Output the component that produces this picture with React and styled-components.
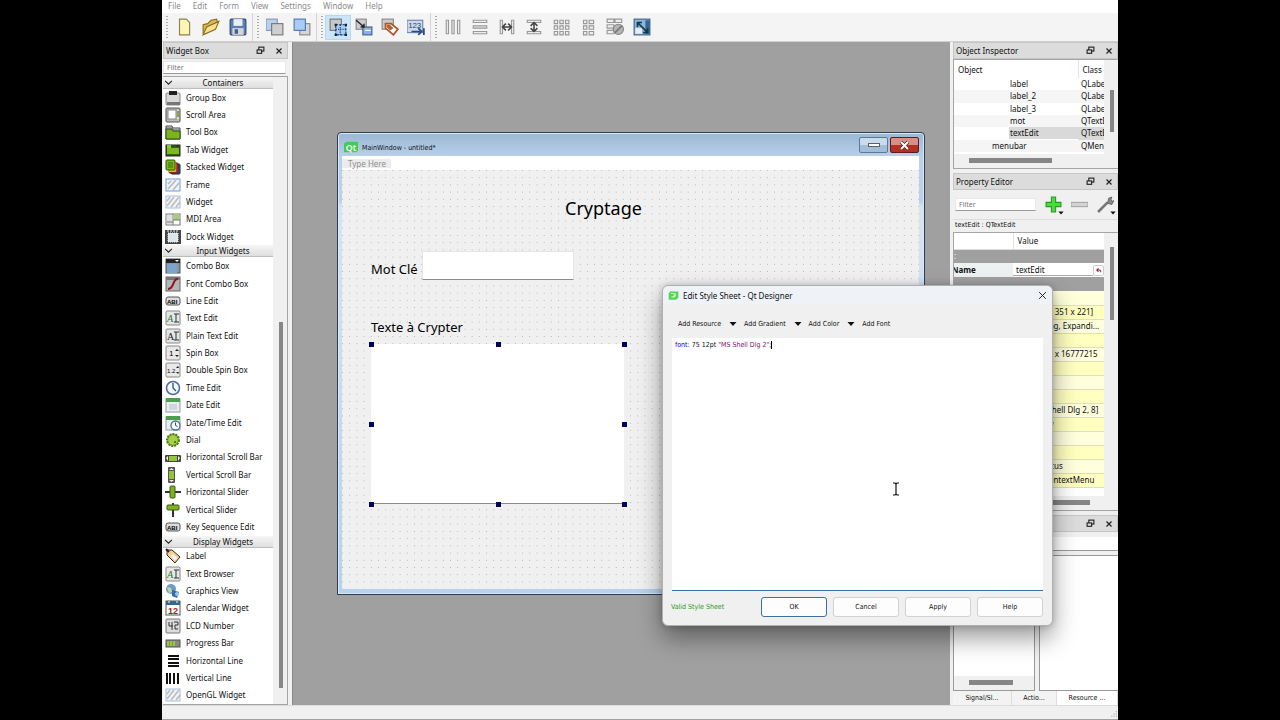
import styled, { createGlobalStyle } from "styled-components";

const icons = {
  groupBox: (
    <>
      <rect x="1" y="3" width="14" height="12" rx="1" fill="#d9d9d9" stroke="#8a8a8a" />
      <rect x="2" y="12" width="13" height="3" fill="#777" />
      <rect x="4" y="1" width="8" height="4" fill="#222" />
    </>
  ),
  scrollArea: (
    <>
      <rect x="1" y="1" width="14" height="14" rx="1" fill="#bbb" stroke="#555" />
      <rect x="3" y="3" width="8" height="9" fill="#fff" stroke="#888" />
      <rect x="12" y="3" width="2" height="9" fill="#e8e8c0" />
      <path d="M12 5h2M12 9h2" stroke="#333" />
      <rect x="12" y="6" width="2" height="2" fill="#8b0" />
    </>
  ),
  toolBox: (
    <>
      <path d="M1 2h6l1 2h7v11H1z" fill="#e5e5e5" stroke="#444" />
      <path d="M1 5h6l1 2h7v8H1z" fill="#7ab51d" stroke="#2f4a0c" />
      <path d="M1 4h6l1 2h7" fill="none" stroke="#555" />
    </>
  ),
  tabWidget: (
    <>
      <rect x="1" y="3" width="14" height="11" fill="#3c5c10" stroke="#222" />
      <rect x="2" y="6" width="12" height="6" fill="#7cb81f" />
      <rect x="2" y="3" width="4" height="3" fill="#8ccc2a" />
      <rect x="7" y="3" width="3" height="2" fill="#1f5030" />
      <rect x="11" y="3" width="3" height="2" fill="#2b3d11" />
    </>
  ),
  stacked: (
    <>
      <rect x="6" y="5" width="9" height="10" rx="1" fill="#2f5fa8" stroke="#123" />
      <rect x="4" y="4" width="9" height="10" rx="1" fill="#d2382a" stroke="#611" />
      <rect x="3" y="3" width="8" height="10" rx="1" fill="#e2b822" />
      <rect x="1" y="1" width="9" height="10" rx="1" fill="#79b81c" stroke="#33550d" />
      <path d="M3 4h5M3 6h5M3 8h5" stroke="#3d6a10" />
    </>
  ),
  frame: (
    <>
      <rect x="1" y="2" width="14" height="12" fill="#eef4fb" stroke="#6c9bd2" />
      <path d="M3 12l8-9M8 13l6-7M3 7l3-3" stroke="#b9b9b9" strokeWidth="1.6" />
    </>
  ),
  widget: (
    <>
      <rect x="1" y="2" width="14" height="12" fill="#f2f4f6" stroke="#a3bedd" />
      <path d="M2 12l7-9M6 13l8-10M11 13l4-5M2 7l3-4" stroke="#bcbcbc" strokeWidth="1.6" />
    </>
  ),
  mdi: (
    <>
      <rect x="1" y="3" width="14" height="11" fill="#fff" stroke="#777" />
      <rect x="2" y="4" width="5" height="9" fill="#e0e0e0" />
      <rect x="9" y="4" width="5" height="5" fill="#a2d070" />
      <path d="M8 3v11M8 9h7M2 11h6" stroke="#777" />
    </>
  ),
  dock: (
    <>
      <rect x="0" y="1" width="16" height="14" fill="#444" />
      <rect x="3" y="4" width="10" height="9" fill="#dde5ec" stroke="#fff" strokeDasharray="1 1" />
      <path d="M3 1v2M6 1v2M9 1v2M12 1v2" stroke="#eee" />
    </>
  ),
  combo: (
    <>
      <rect x="1" y="1" width="14" height="14" fill="#8795a5" stroke="#4a5562" />
      <rect x="1" y="1" width="14" height="4" fill="#222" />
      <rect x="2" y="6" width="10" height="9" fill="#7fa3cb" />
      <path d="M10 2h4l-2 2z" fill="#fff" />
    </>
  ),
  fontCombo: (
    <>
      <rect x="1" y="1" width="14" height="14" fill="#b5b5b5" stroke="#666" />
      <rect x="1" y="1" width="14" height="3" fill="#777" />
      <path d="M13 3C7 2 10 13 3 13" fill="none" stroke="#8e1522" strokeWidth="2" />
    </>
  ),
  lineEdit: (
    <>
      <rect x="1" y="4" width="14" height="8" rx="2" fill="#ddd" stroke="#555" />
      <text x="2" y="11" fontSize="6" fontWeight="700" fontFamily="Liberation Sans, sans-serif">ABI</text>
    </>
  ),
  textEdit: (
    <>
      <rect x="1" y="1" width="14" height="14" rx="1" fill="#e6e6e6" stroke="#888" />
      <text x="2" y="12" fontSize="10" fontStyle="italic" fill="#197a32" fontFamily="Liberation Serif, serif">A</text>
      <path d="M9 4h5M9 12h5M11 4v8" stroke="#333" />
    </>
  ),
  plainEdit: (
    <>
      <rect x="1" y="1" width="14" height="14" rx="1" fill="#e6e6e6" stroke="#888" />
      <text x="2" y="12" fontSize="10" fill="#222" fontFamily="Liberation Serif, serif">A</text>
      <path d="M9 4h5M9 12h5M11 4v8" stroke="#333" />
    </>
  ),
  spin: (
    <>
      <rect x="1" y="1" width="14" height="14" rx="1" fill="#e9e9e9" stroke="#888" />
      <text x="4" y="11" fontSize="8" fontFamily="Liberation Sans, sans-serif">1</text>
      <path d="M10 6l2-2 2 2zM10 10l2 2 2-2z" fill="#222" />
    </>
  ),
  doubleSpin: (
    <>
      <rect x="1" y="1" width="14" height="14" rx="1" fill="#e9e9e9" stroke="#888" />
      <text x="2" y="11" fontSize="6" fontFamily="Liberation Sans, sans-serif">1.2</text>
      <path d="M11 6l2-2 1 2zM11 10l2 2 1-2z" fill="#222" />
    </>
  ),
  time: (
    <>
      <circle cx="8" cy="8" r="6.5" fill="#f4f9ff" stroke="#4d7196" strokeWidth="1.6" />
      <path d="M8 3v5l3 3" fill="none" stroke="#2d4f78" strokeWidth="1.3" />
    </>
  ),
  date: (
    <>
      <rect x="1" y="2" width="14" height="13" fill="#e9eef2" stroke="#999" />
      <rect x="1" y="1" width="14" height="4" fill="#4aa04c" />
      <path d="M4 8h8M4 10h8M4 12h8" stroke="#b3bfca" />
    </>
  ),
  dateTime: (
    <>
      <rect x="1" y="2" width="14" height="13" fill="#e9eef2" stroke="#999" />
      <rect x="1" y="1" width="14" height="4" fill="#4aa04c" />
      <circle cx="10.5" cy="10.5" r="4.5" fill="#f4f9ff" stroke="#4d7196" strokeWidth="1.3" />
      <path d="M10.5 7.5v3l2 1" fill="none" stroke="#2d4f78" />
    </>
  ),
  dial: (
    <>
      <circle cx="8" cy="8" r="6" fill="#7fb52a" stroke="#4f7a14" strokeWidth="2" strokeDasharray="2 1" />
      <circle cx="8" cy="8" r="4.5" fill="#a4d24c" />
      <circle cx="10" cy="10" r="1" fill="#3b5c0c" />
    </>
  ),
  hScroll: (
    <>
      <rect x="0" y="6" width="16" height="7" rx="1" fill="#444" />
      <rect x="4" y="7" width="8" height="5" fill="#93c63a" />
      <path d="M3 7v5L1 9zM13 7v5l2-3z" fill="#fff" />
    </>
  ),
  vScroll: (
    <>
      <rect x="3" y="0" width="7" height="16" rx="1" fill="#555" />
      <rect x="4" y="4" width="5" height="8" fill="#93c63a" />
      <path d="M4 3h5L6.500 1zM4 13h5l-2.500 2z" fill="#eee" />
    </>
  ),
  hSlider: (
    <>
      <path d="M0 8h16" stroke="#333" strokeWidth="2" />
      <rect x="5" y="2" width="5" height="12" rx="1" fill="#7cb224" stroke="#3d5e0e" />
    </>
  ),
  vSlider: (
    <>
      <path d="M8 1v14" stroke="#333" strokeWidth="2" />
      <rect x="2" y="3" width="12" height="5" rx="1" fill="#7cb224" stroke="#3d5e0e" />
    </>
  ),
  tag: (
    <>
      <path d="M2 2l5 0 8 7-5 6-8-8z" fill="#f5cf9a" stroke="#3c2b18" />
      <path d="M7 7l4 4" stroke="#fff" strokeWidth="3" />
      <path d="M1 1l3 3" stroke="#222" strokeWidth="2" />
    </>
  ),
  graphics: (
    <>
      <circle cx="6" cy="6" r="5" fill="#6f9cc4" />
      <path d="M2 4l4 1 1 4-3 1z" fill="#bcd9a0" />
      <path d="M7 7l7 2-2 6-5-2z" fill="#3569a3" />
      <circle cx="12" cy="11" r="2" fill="#9cc6ea" />
    </>
  ),
  calendar: (
    <>
      <rect x="1" y="1" width="14" height="14" fill="#fff" stroke="#555" />
      <rect x="1" y="1" width="14" height="4" fill="#35649d" />
      <path d="M4 1v2M12 1v2" stroke="#fff" />
      <text x="3" y="14" fontSize="9" fontWeight="700" fill="#a52020" fontFamily="Liberation Sans, sans-serif">12</text>
    </>
  ),
  lcd: (
    <>
      <rect x="1" y="1" width="14" height="14" rx="1" fill="#dcdcdc" stroke="#777" />
      <path d="M4 4v4h4M7 4v8M9 4h4v3h-3v4h3" fill="none" stroke="#333" />
    </>
  ),
  progress: (
    <>
      <rect x="1" y="5" width="14" height="7" fill="#8b8b7a" stroke="#555" />
      <path d="M3 6v5M6 6v5M9 6v5" stroke="#96c83c" strokeWidth="2" />
    </>
  ),
  hLine: <path d="M3 3h11M3 6h11M3 10h11M3 13h11" stroke="#111" strokeWidth="2" />,
  vLine: <path d="M2 3v11M5 3v11M9 3v11M13 3v11" stroke="#111" strokeWidth="2" />,
  // toolbar
  newFile: <path d="M4 1h6l3 3v11H4z" fill="#fcf6b4" stroke="#8a8250" />,
  open: (
    <>
      <path d="M1 14V6l4-1 3-3 5-1 1 4" fill="#dcb954" stroke="#8a6d1e" />
      <path d="M1 15L4 8l11-5-3 7z" fill="#f7e08e" stroke="#8a6d1e" />
    </>
  ),
  save: (
    <>
      <rect x="1" y="1" width="14" height="14" rx="1" fill="#5b7fb5" stroke="#2f4a73" />
      <rect x="4" y="1" width="8" height="6" fill="#e8eef5" />
      <rect x="3" y="9" width="10" height="6" fill="#d5d5d5" />
      <rect x="5" y="10" width="3" height="4" fill="#3f5f90" />
    </>
  ),
  sendBack: (
    <>
      <rect x="0" y="1" width="10" height="10" fill="#b9d0ee" stroke="#8199b8" />
      <rect x="5" y="5" width="10" height="10" fill="#cfcfcf" stroke="#777" />
    </>
  ),
  bringFront: (
    <>
      <rect x="6" y="5" width="9" height="10" fill="#d5d5d5" stroke="#888" />
      <rect x="1" y="1" width="10" height="10" fill="#a9cbf5" stroke="#4c78b4" />
    </>
  ),
  editWidgets: (
    <>
      <rect x="1" y="1" width="10" height="10" fill="#c5c8ca" stroke="#777" />
      <rect x="6" y="6" width="9" height="9" fill="#a9cdf3" stroke="#123a66" strokeDasharray="2 1" />
      <path d="M6 10h9M10 6v9" stroke="#123a66" strokeDasharray="1 1" />
      <path d="M5 5h2v2H5zM14 5h2v2h-2zM5 14h2v2H5zM14 14h2v2h-2z" fill="#10243c" />
    </>
  ),
  editSignals: (
    <>
      <rect x="1" y="1" width="9" height="9" fill="#ccc" stroke="#888" />
      <rect x="7" y="8" width="8" height="7" fill="#8fb1de" stroke="#3c5f92" />
      <path d="M1 2l7 6M8 5v3H5" fill="none" stroke="#222" strokeWidth="1.3" />
      <path d="M9 11h5" stroke="#fff" />
    </>
  ),
  editBuddies: (
    <>
      <rect x="1" y="1" width="10" height="9" fill="#ccc" stroke="#888" />
      <path d="M4 5h5l6 5-4 5-7-6z" fill="#fff" stroke="#a9562a" strokeWidth="1.5" />
      <path d="M5 6l3 0 3 3-3 2-3-3z" fill="#b5622b" />
    </>
  ),
  tabOrder: (
    <>
      <rect x="0" y="2" width="14" height="11" fill="#cdd9ea" stroke="#7089ad" />
      <text x="1" y="9" fontSize="7" fill="#234a86" fontFamily="Liberation Sans, sans-serif">123</text>
      <path d="M4 12h8M10 9l3 3-3 3M15 9v6" fill="none" stroke="#234a86" strokeWidth="1.5" />
    </>
  ),
  layH: <path d="M2 2h2v12H2zM7 2h2v12H7zM12 2h2v12h-2z" fill="#eee" stroke="#989898" />,
  layV: <path d="M2 2h12v2H2zM2 7h12v2H2zM2 12h12v2H2z" fill="#eee" stroke="#989898" />,
  splitH: (
    <>
      <path d="M2 2h2v12H2zM12 2h2v12h-2z" fill="#eee" stroke="#989898" />
      <path d="M4 8h8M7 5L4 8l3 3M9 5l3 3-3 3" fill="none" stroke="#444" strokeWidth="1.4" />
    </>
  ),
  splitV: (
    <>
      <path d="M2 2h12v2H2zM2 12h12v2H2z" fill="#eee" stroke="#989898" />
      <path d="M8 4v8M5 7l3-3 3 3M5 9l3 3 3-3" fill="none" stroke="#444" strokeWidth="1.4" />
    </>
  ),
  grid: (
    <path
      d="M2 2h3v3H2zM7 2h3v3H7zM12 2h3v3h-3zM2 7h3v3H2zM7 7h3v3H7zM12 7h3v3h-3zM2 12h3v3H2zM7 12h3v3H7zM12 12h3v3h-3z"
      fill="#eee"
      stroke="#989898"
    />
  ),
  formLayout: (
    <path d="M4 2h3v3H4zM9 2h4v3H9zM4 7h3v3H4zM9 7h4v3H9zM4 12h3v3H4zM9 12h4v3H9z" fill="#eee" stroke="#989898" />
  ),
  breakLayout: (
    <>
      <path d="M1 1h6v3H1zM8 1h6v3H8zM1 6h6v3H1zM1 11h6v3H1z" fill="#eee" stroke="#989898" />
      <circle cx="11" cy="10" r="4.500" fill="#b5b5b5" stroke="#858585" />
      <path d="M8 13l6-6" stroke="#777" strokeWidth="1.4" />
    </>
  ),
  adjust: (
    <>
      <rect x="1" y="1" width="14" height="14" fill="#8fb3dc" stroke="#3d648f" />
      <path d="M2 9h6v5H2z" fill="#e6eef5" />
      <rect x="11" y="2" width="4" height="12" fill="#3a648f" />
      <path d="M4 4l9 9M4 8V4h4M9 13h4V9" fill="none" stroke="#0d3a44" strokeWidth="1.5" />
    </>
  ),
  qt: (
    <>
      <path d="M3 2h13v10l-2 2H0V4z" fill="#41cd52" />
      <text x="2" y="12" fontSize="10" fontWeight="600" fill="#fff" fontFamily="Noto Sans, sans-serif">Qt</text>
    </>
  ),
  qtSmall: (
    <>
      <path d="M3 2h12v9l-3 3H1V5z" fill="#4fd45e" />
      <path d="M4 5h5v5H5M11 5l-1 5" fill="none" stroke="#d3f7b0" strokeWidth="1.5" />
    </>
  ),
  float: (
    <>
      <rect x="5" y="2" width="9" height="7" fill="none" stroke="#222" strokeWidth="2" />
      <rect x="2" y="7" width="8" height="6" fill="#ddd" stroke="#222" strokeWidth="2" />
    </>
  ),
  cross: <path d="M3 3l10 10M13 3L3 13" stroke="#222" strokeWidth="2.4" />,
  thinCross: <path d="M2 2l12 12M14 2L2 14" stroke="#222" strokeWidth="1.7" />,
  whiteCross: (
    <>
      <path d="M3 3l10 10M13 3L3 13" stroke="#4a2020" strokeWidth="5" />
      <path d="M3 3l10 10M13 3L3 13" stroke="#fff" strokeWidth="3" />
    </>
  ),
  chevron: <path d="M2 5l6 6 6-6" fill="none" stroke="#222" strokeWidth="2" />,
  arrowDown: <path d="M1 4h14l-7 8z" fill="#111" />,
  plus: <path d="M6 1h4v5h5v4h-5v5H6v-5H1V6h5z" fill="#4bdc3a" stroke="#279a24" />,
  minus: <rect x="0" y="6" width="16" height="4" fill="#d3d3d3" stroke="#a5a5a5" />,
  wrench: (
    <>
      <path d="M1 15L10 6" stroke="#777" strokeWidth="2.5" />
      <path d="M10 6l1-4 3-1-1 3 2 1 1-1-2 4-4-1z" fill="#888" stroke="#555" strokeWidth=".7" />
    </>
  ),
  reset: <path d="M13 12c1-5-3-6-7-5M8 3L4 7l4 4" fill="none" stroke="#a02040" strokeWidth="2.4" />,
  ibeam: <path d="M5 2h2l1 1 1-1h2M8 3v10M5 14h2l1-1 1 1h2" fill="none" stroke="#111" strokeWidth="1.2" />,
  grip: <path d="M12 2h2v2h-2zM8 6h2v2H8zM12 6h2v2h-2zM4 10h2v2H4zM8 10h2v2H8zM12 10h2v2h-2z" fill="#a5a5a5" />,
};

const Icon = ({ name, size = 16 }) => (
  <Svg viewBox="0 0 16 16" width={size} height={size} aria-hidden="true">
    {icons[name]}
  </Svg>
);

const menus = ["File", "Edit", "Form", "View", "Settings", "Window", "Help"];

const toolGroups = [
  { size: 27, tools: [["New", "newFile"], ["Open", "open"], ["Save", "save"]] },
  { size: 27, tools: [["Send to Back", "sendBack"], ["Bring to Front", "bringFront"]] },
  {
    size: 26,
    tools: [
      ["Edit Widgets", "editWidgets"],
      ["Edit Signals/Slots", "editSignals"],
      ["Edit Buddies", "editBuddies"],
      ["Edit Tab Order", "tabOrder"],
    ],
  },
  {
    size: 27,
    tools: [
      ["Lay Out Horizontally", "layH"],
      ["Lay Out Vertically", "layV"],
      ["Split Horizontally", "splitH"],
      ["Split Vertically", "splitV"],
      ["Lay Out in a Grid", "grid"],
      ["Lay Out in a Form", "formLayout"],
      ["Break Layout", "breakLayout"],
      ["Adjust Size", "adjust"],
    ],
  },
];

const widgetGroups = [
  {
    title: "Containers",
    items: [
      ["Group Box", "groupBox"],
      ["Scroll Area", "scrollArea"],
      ["Tool Box", "toolBox"],
      ["Tab Widget", "tabWidget"],
      ["Stacked Widget", "stacked"],
      ["Frame", "frame"],
      ["Widget", "widget"],
      ["MDI Area", "mdi"],
      ["Dock Widget", "dock"],
    ],
  },
  {
    title: "Input Widgets",
    items: [
      ["Combo Box", "combo"],
      ["Font Combo Box", "fontCombo"],
      ["Line Edit", "lineEdit"],
      ["Text Edit", "textEdit"],
      ["Plain Text Edit", "plainEdit"],
      ["Spin Box", "spin"],
      ["Double Spin Box", "doubleSpin"],
      ["Time Edit", "time"],
      ["Date Edit", "date"],
      ["Date/Time Edit", "dateTime"],
      ["Dial", "dial"],
      ["Horizontal Scroll Bar", "hScroll"],
      ["Vertical Scroll Bar", "vScroll"],
      ["Horizontal Slider", "hSlider"],
      ["Vertical Slider", "vSlider"],
      ["Key Sequence Edit", "lineEdit"],
    ],
  },
  {
    title: "Display Widgets",
    items: [
      ["Label", "tag"],
      ["Text Browser", "textEdit"],
      ["Graphics View", "graphics"],
      ["Calendar Widget", "calendar"],
      ["LCD Number", "lcd"],
      ["Progress Bar", "progress"],
      ["Horizontal Line", "hLine"],
      ["Vertical Line", "vLine"],
      ["OpenGL Widget", "widget"],
    ],
  },
];

const objects = [
  { name: "label", type: "QLabel", indent: 57 },
  { name: "label_2", type: "QLabel", indent: 57 },
  { name: "label_3", type: "QLabel", indent: 57 },
  { name: "mot", type: "QTextEdit", indent: 57 },
  { name: "textEdit", type: "QTextEdit", indent: 57, selected: true },
  { name: "menubar", type: "QMenuBar", indent: 39 },
];

const values = [
  { text: "" },
  { text: "[(30, 210), 351 x 221]" },
  { text: "[Expanding, Expandi..." },
  { text: "" },
  { text: "16777215 x 16777215" },
  { text: "" },
  { text: "" },
  { text: "" },
  { text: "[MS Shell Dlg 2, 8]", icon: "plainEdit" },
  { text: "Arrow", icon: "ibeam" },
  { text: "" },
  { text: "" },
  { text: "StrongFocus" },
  { text: "DefaultContextMenu" },
];

const DockHead = ({ title }) => (
  <SDockHead>
    <SDockTitle>{title}</SDockTitle>
    <SDockBtn aria-label="Float">
      <Icon name="float" size={9} />
    </SDockBtn>
    <SDockBtn aria-label="Close">
      <Icon name="cross" size={8} />
    </SDockBtn>
  </SDockHead>
);

const WidgetBox = () => (
  <SLeft>
    <DockHead title="Widget Box" />
    <SFilterRow>
      <SFilter placeholder="Filter" aria-label="Filter widgets" />
    </SFilterRow>
    <SBoxBody>
      <SBoxList>
        {widgetGroups.map((group) => (
          <SGroup key={group.title} $count={group.items.length}>
            <SGroupHead>
              <Icon name="chevron" size={9} />
              <span>{group.title}</span>
            </SGroupHead>
            {group.items.map(([label, icon]) => (
              <SItem key={label}>
                <Icon name={icon} />
                {label}
              </SItem>
            ))}
          </SGroup>
        ))}
      </SBoxList>
      <SVTrack>
        <SVThumb $top={245} $height={366} />
      </SVTrack>
    </SBoxBody>
  </SLeft>
);

const ObjectInspector = () => (
  <SInspector>
    <DockHead title="Object Inspector" />
    <STree>
      <STreeView>
        <STreeTable>
          <thead>
            <tr>
              <th>Object</th>
              <th>Class</th>
            </tr>
          </thead>
          <tbody>
            {objects.map((obj) => (
              <STreeRow key={obj.name} $selected={obj.selected}>
                <STreeCell $indent={obj.indent}>
                  <span>{obj.name}</span>
                </STreeCell>
                <td>{obj.type}</td>
              </STreeRow>
            ))}
          </tbody>
        </STreeTable>
        <SHTrack>
          <SHThumb $left={15} $width={83} />
        </SHTrack>
      </STreeView>
      <SVTrack>
        <SVThumb $top={30} $height={42} />
      </SVTrack>
    </STree>
  </SInspector>
);

const PropertyEditor = () => (
  <SProps>
    <DockHead title="Property Editor" />
    <SPropTools>
      <SFilter placeholder="Filter" aria-label="Filter properties" />
      <SPropBtn aria-label="Add dynamic property">
        <Icon name="plus" size={17} />
        <Icon name="arrowDown" size={6} />
      </SPropBtn>
      <SPropBtn aria-label="Remove dynamic property">
        <Icon name="minus" size={17} />
      </SPropBtn>
      <SPropBtn aria-label="Configure">
        <Icon name="wrench" size={17} />
        <Icon name="arrowDown" size={6} />
      </SPropBtn>
    </SPropTools>
    <SPropTitle>textEdit : QTextEdit</SPropTitle>
    <STree>
      <STreeView>
        <SPropTable>
          <thead>
            <tr>
              <th aria-label="Property" />
              <th>Value</th>
            </tr>
          </thead>
          <tbody>
            <SCategory>
              <td colSpan="2">:</td>
            </SCategory>
            <SNameRow>
              <td>Name</td>
              <td>
                <SNameEdit>
                  <input defaultValue="textEdit" aria-label="Name" />
                  <button aria-label="Reset">
                    <Icon name="reset" size={7} />
                  </button>
                </SNameEdit>
              </td>
            </SNameRow>
            <SCategory>
              <td colSpan="2">.</td>
            </SCategory>
            {values.map((value, i) => (
              <SValueRow key={i}>
                <td />
                <td>
                  <SValue>
                    {value.icon && <Icon name={value.icon} size={12} />}
                    {value.text}
                  </SValue>
                </td>
              </SValueRow>
            ))}
          </tbody>
        </SPropTable>
        <SHTrack>
          <SHThumb $left={60} $width={76} />
        </SHTrack>
      </STreeView>
      <SVTrack>
        <SVThumb $top={14} $height={73} />
      </SVTrack>
    </STree>
  </SProps>
);

const ResourceDock = () => (
  <SResource>
    <DockHead title="" />
    <SResourceBar />
    <SPanes>
      <SPane>
        <SHTrack>
          <SHThumb $left={15} $width={44} />
        </SHTrack>
      </SPane>
      <SPane />
    </SPanes>
    <STabs>
      <STab>Signal/Sl...</STab>
      <STab>Actio...</STab>
      <STab $active>Resource ...</STab>
    </STabs>
  </SResource>
);

const FormWindow = () => (
  <SWindow>
    <SWinTitle>
      <Icon name="qt" size={14} />
      <span>MainWindow - untitled*</span>
      <SMinBtn aria-label="Minimize">
        <i />
      </SMinBtn>
      <SCloseBtn aria-label="Close">
        <Icon name="whiteCross" size={11} />
      </SCloseBtn>
    </SWinTitle>
    <SWinMenu>
      <span>Type Here</span>
    </SWinMenu>
    <SForm>
      <SHeading>Cryptage</SHeading>
      <SField>
        <label htmlFor="mot">Mot Clé</label>
        <input id="mot" />
      </SField>
      <SAreaLabel htmlFor="texte">Texte à Crypter</SAreaLabel>
      <SSelection>
        <textarea id="texte" />
        {[0, 50, 100].map((y) =>
          [0, 50, 100].map((x) => (x === 50 && y === 50 ? null : <SHandle key={`${x}-${y}`} $x={x} $y={y} />))
        )}
      </SSelection>
    </SForm>
  </SWindow>
);

const StyleDialog = () => (
  <SDialog role="dialog" aria-label="Edit Style Sheet">
    <SDialogTitle>
      <Icon name="qtSmall" size={11} />
      <span>Edit Style Sheet - Qt Designer</span>
      <SDockBtn aria-label="Close dialog">
        <Icon name="thinCross" size={9} />
      </SDockBtn>
    </SDialogTitle>
    <SDialogTools>
      <SToolText>
        Add Resource <Icon name="arrowDown" size={8} />
      </SToolText>
      <SToolText>
        Add Gradient <Icon name="arrowDown" size={8} />
      </SToolText>
      <SToolText>
        Add Color <Icon name="arrowDown" size={8} />
      </SToolText>
      <SToolText>Add Font</SToolText>
    </SDialogTools>
    <SEditor>
      <textarea aria-label="Style sheet" spellCheck="false" defaultValue={'font: 75 12pt "MS Shell Dlg 2";'} />
      <SHighlight aria-hidden="true">
        <b>font:</b> 75 12pt <em>"MS Shell Dlg 2"</em>;
        <i />
      </SHighlight>
    </SEditor>
    <SDialogFoot>
      <SValid>Valid Style Sheet</SValid>
      <SDialogBtn $primary>OK</SDialogBtn>
      <SDialogBtn>Cancel</SDialogBtn>
      <SDialogBtn>Apply</SDialogBtn>
      <SDialogBtn>Help</SDialogBtn>
    </SDialogFoot>
    <SPointer>
      <Icon name="ibeam" size={16} />
    </SPointer>
  </SDialog>
);

export default function App() {
  return (
    <SScreen>
      <GlobalStyle />
      <SApp>
        <SMenubar>
          {menus.map((menu) => (
            <button key={menu}>{menu}</button>
          ))}
        </SMenubar>
        <SToolbar>
          {toolGroups.map((group, i) => (
            <SToolGroup key={i}>
              {group.tools.map(([label, icon]) => (
                <STool key={label} aria-label={label} $size={group.size} $active={icon === "editWidgets"}>
                  <Icon name={icon} size={18} />
                </STool>
              ))}
            </SToolGroup>
          ))}
        </SToolbar>
        <SMain>
          <WidgetBox />
          <SCanvas>
            <FormWindow />
          </SCanvas>
          <SRight>
            <ObjectInspector />
            <PropertyEditor />
            <ResourceDock />
          </SRight>
        </SMain>
        <SStatus>
          <Icon name="grip" size={9} />
        </SStatus>
        <StyleDialog />
      </SApp>
    </SScreen>
  );
}

const GlobalStyle = createGlobalStyle`
  * {
    box-sizing: border-box;
  }
  body {
    margin: 0;
    background: #000;
  }
  body, button, input, textarea {
    font-family: "Noto Sans", "Open Sans", sans-serif;
    font-size: 8px;
    color: #111;
  }
  button {
    padding: 0;
    border: none;
    background: none;
  }
  input, textarea {
    border: none;
    border-radius: 0;
    outline: none;
    resize: none;
  }
`;

const Svg = styled.svg`
  display: block;
  flex: none;
`;

const SScreen = styled.div`
  background: #000;
  padding: 0 162px;
`;

const SApp = styled.div`
  position: relative;
  display: flex;
  flex-direction: column;
  min-height: 100vh;
  background: #f0f0f0;
  overflow: hidden;
`;

const SMenubar = styled.nav`
  display: flex;
  gap: 12px;
  height: 13px;
  padding: 0 6px;
  background: #fff;
  button {
    height: 11px;
    color: #8c8c8c;
    line-height: 11px;
  }
`;

const SToolbar = styled.div`
  display: flex;
  height: 29px;
  background: #f4f4f4;
  border-bottom: 1px solid #d0d0d0;
`;

const SToolGroup = styled.div`
  display: flex;
  align-items: center;
  padding: 0 1px 0 4px;
  border-right: 1px solid #d4d4d4;
  &::before {
    content: "";
    width: 2px;
    height: 22px;
    margin-right: 2px;
    background: repeating-linear-gradient(#aaa 0 1px, transparent 1px 3px);
  }
  &:last-child {
    border: none;
  }
`;

const STool = styled.button`
  display: flex;
  align-items: center;
  justify-content: center;
  width: ${(p) => p.$size}px;
  height: 25px;
  border: 1px solid ${(p) => (p.$active ? "#b5d9f0" : "transparent")};
  background: ${(p) => (p.$active ? "#cce6f7" : "none")};
`;

const SMain = styled.div`
  flex: 1;
  display: flex;
`;

const SLeft = styled.aside`
  display: flex;
  flex-direction: column;
  width: 126px;
  padding-left: 1px;
`;

const SDockHead = styled.header`
  display: flex;
  align-items: center;
  gap: 10px;
  height: 17px;
  padding: 0 4px 0 2px;
  background: #dcdcdc;
  border: 1px solid #c6c6c6;
  flex: none;
`;

const SDockTitle = styled.span`
  flex: 1;
  line-height: 15px;
`;

const SDockBtn = styled.button`
  display: flex;
`;

const SFilterRow = styled.div`
  padding: 2px 2px 2px 0;
`;

const SFilter = styled.input`
  display: block;
  width: 100%;
  height: 13px;
  padding: 0 3px;
  border: 1px solid #e8e8e8;
  border-bottom-color: #999;
  background: #fff;
  font-size: 7px;
  &::placeholder {
    color: #777;
  }
`;

const SBoxBody = styled.div`
  flex: 1;
  display: flex;
  border: 1px solid #a5a5a5;
  border-left: none;
`;

const SBoxList = styled.div`
  flex: 1;
  display: flex;
  flex-direction: column;
  background: #fff;
`;

const SGroup = styled.section`
  display: flex;
  flex-direction: column;
  flex: ${(p) => p.$count} 0 auto;
`;

const SGroupHead = styled.button`
  display: flex;
  align-items: center;
  height: 12px;
  padding-left: 1px;
  background: linear-gradient(#f6f6f6, #dedede);
  border-bottom: 1px solid #bdbdbd;
  line-height: 11px;
  span {
    flex: 1;
  }
`;

const SItem = styled.div`
  flex: 1;
  display: flex;
  align-items: center;
  gap: 5px;
  min-height: 17px;
  padding-left: 2px;
  line-height: 12px;
  white-space: nowrap;
`;

const SVTrack = styled.div`
  width: 14px;
  flex: none;
  background: #f0f0f0;
`;

const SVThumb = styled.div`
  width: 4px;
  height: ${(p) => p.$height}px;
  margin: ${(p) => p.$top}px 0 0 6px;
  background: #868686;
`;

const SHTrack = styled.div`
  height: 14px;
  padding-top: 4px;
  background: #f0f0f0;
  margin-top: auto;
`;

const SHThumb = styled.div`
  height: 5px;
  width: ${(p) => p.$width}px;
  margin-left: ${(p) => p.$left}px;
  background: #868686;
`;

const SCanvas = styled.main`
  position: relative;
  flex: 1;
  margin-left: 4px;
  background: #a0a0a0;
  border-left: 1px solid #8a8a8a;
`;

const SRight = styled.aside`
  display: flex;
  flex-direction: column;
  gap: 4px;
  width: 168px;
  padding-left: 3px;
`;

const SInspector = styled.section`
  display: flex;
  flex-direction: column;
  height: 127px;
`;

const STree = styled.div`
  flex: 1;
  display: flex;
  min-height: 0;
  border: 1px solid #a5a5a5;
  border-right: none;
`;

const STreeView = styled.div`
  flex: 1;
  display: flex;
  flex-direction: column;
  min-width: 0;
  overflow: hidden;
  background: #fff;
`;

const STreeTable = styled.table`
  width: 100%;
  height: 92px;
  table-layout: fixed;
  border-collapse: collapse;
  th {
    height: 18px;
    padding: 0 4px;
    text-align: left;
    font-weight: 400;
  }
  th + th {
    width: 26px;
    border-left: 1px solid #e2e2e2;
  }
  td {
    padding: 0 0 0 3px;
    line-height: 12px;
    overflow: hidden;
    white-space: nowrap;
  }
`;

const STreeRow = styled.tr`
  &:nth-child(even) {
    background: #f5f5f5;
  }
  td + td,
  td span {
    background: ${(p) => (p.$selected ? "#d9d9d9" : "transparent")};
  }
`;

const STreeCell = styled.td`
  && {
    padding-left: ${(p) => p.$indent - 2}px;
  }
  span {
    display: block;
    padding-left: 1px;
  }
`;

const SProps = styled.section`
  display: flex;
  flex-direction: column;
  height: 338px;
`;

const SPropTools = styled.div`
  display: flex;
  align-items: center;
  gap: 9px;
  height: 29px;
  padding: 0 4px 0 2px;
  flex: none;
`;

const SPropBtn = styled.button`
  display: flex;
  align-items: flex-end;
  width: 17px;
  flex: none;
  svg + svg {
    margin: 0 -3px -3px -4px;
  }
`;

const SPropTitle = styled.div`
  height: 13px;
  padding-left: 2px;
  border-top: 1px solid #ddd;
  font-family: "DejaVu Sans Condensed", "DejaVu Sans", sans-serif;
  font-size: 7px;
  line-height: 11px;
  flex: none;
`;

const SPropTable = styled.table`
  width: 100%;
  table-layout: fixed;
  border-collapse: collapse;
  th {
    height: 16px;
    padding: 0 4px;
    text-align: left;
    font-weight: 400;
    border-bottom: 1px solid #ddd;
  }
  th:first-child {
    width: 59px;
  }
  th + th {
    border-left: 1px solid #e2e2e2;
  }
  td {
    height: 14px;
    padding: 0;
    line-height: 12px;
    white-space: nowrap;
    overflow: hidden;
  }
`;

const SCategory = styled.tr`
  background: #a0a0a0;
  color: #fff;
`;

const SNameRow = styled.tr`
  td:first-child {
    font-weight: 700;
    text-indent: -2px;
    background: #eef1f1;
  }
`;

const SNameEdit = styled.div`
  display: flex;
  align-items: center;
  input {
    width: 100%;
    min-width: 0;
    height: 12px;
    padding: 0 3px;
    border-bottom: 1px solid #aaa;
  }
  button {
    display: flex;
    align-items: center;
    justify-content: center;
    width: 11px;
    height: 11px;
    flex: none;
    border: 1px solid #ccc;
    border-radius: 2px;
  }
`;

const SValueRow = styled.tr`
  background: #ffffdc;
  &:nth-child(odd) {
    background: #ffffbf;
  }
  td {
    border-bottom: 1px solid #dedec4;
  }
`;

const SValue = styled.div`
  display: flex;
  align-items: center;
  gap: 3px;
  height: 12px;
  padding-left: 3px;
`;

const SResource = styled.section`
  flex: 1;
  display: flex;
  flex-direction: column;
`;

const SResourceBar = styled.div`
  height: 19px;
  background: linear-gradient(#f0f0f0 5px, #fff 5px);
  border-bottom: 1px solid #999;
`;

const SPanes = styled.div`
  flex: 1;
  display: grid;
  grid-template-columns: 82px 1fr;
  gap: 4px;
  padding-top: 4px;
`;

const SPane = styled.div`
  display: flex;
  flex-direction: column;
  border: 1px solid #999;
  border-right-color: #999;
  background: #fff;
  &:last-child {
    border-right: none;
  }
`;

const STabs = styled.div`
  display: grid;
  grid-template-columns: 59px 45px 1fr;
  height: 14px;
`;

const STab = styled.button`
  background: ${(p) => (p.$active ? "#fff" : "#f3f3f3")};
  border-right: 1px solid #ddd;
  font-family: "DejaVu Sans Condensed", "DejaVu Sans", sans-serif;
  font-size: 7px;
`;

const SStatus = styled.footer`
  display: flex;
  align-items: flex-end;
  justify-content: flex-end;
  height: 15px;
  border-top: 1px solid #dcdcdc;
  border-bottom: 1px solid #a0a0a0;
`;

const SWindow = styled.section`
  position: absolute;
  left: 44px;
  top: 90px;
  width: 588px;
  height: 463px;
  display: flex;
  flex-direction: column;
  padding: 0 5px 5px 4px;
  border: 1px solid #2c3e50;
  border-radius: 4px 4px 0 0;
  background: linear-gradient(#9ab7d4, #b9d1ea 24px, #b9d1ea 68px, #d5e5f3 74px, #b5d3ee);
  box-shadow: inset 0 0 0 1px #d9e8f5;
`;

const SWinTitle = styled.header`
  display: flex;
  align-items: center;
  height: 23px;
  padding: 5px 0 0 2px;
  font-family: "DejaVu Sans Condensed", "DejaVu Sans", sans-serif;
  font-size: 7px;
  span {
    flex: 1;
    padding: 2px 0 0 4px;
  }
`;

const SMinBtn = styled.button`
  display: flex;
  align-items: center;
  justify-content: center;
  width: 29px;
  height: 16px;
  margin: 0 2px 4px 0;
  border: 1px solid #5f7891;
  border-radius: 2px;
  background: linear-gradient(#c9dbec 50%, #a3bdd8 50%);
  i {
    width: 12px;
    height: 4px;
    background: #fff;
    border: 1px solid #566;
  }
`;

const SCloseBtn = styled(SMinBtn)`
  border-color: #5a1c1c;
  background: linear-gradient(#d88f86 50%, #b52f22 50%);
  margin-right: 0;
`;

const SWinMenu = styled.div`
  height: 14px;
  padding-top: 3px;
  background: #fff;
  span {
    display: block;
    width: 49px;
    padding-left: 6px;
    background: #ececec;
    color: #909090;
    line-height: 9px;
  }
`;

const SForm = styled.div`
  flex: 1;
  padding: 26px 29px;
  background: radial-gradient(circle at 0 0, #b0b0b0 1px, transparent 1px) #f0f0f0;
  background-size: 1.25% calc(100% / 58);
  color: #000;
  font-size: 13px;
`;

const SHeading = styled.h1`
  margin: 0 0 31px 194px;
  font-size: 18px;
  line-height: 24px;
  font-weight: 400;
`;

const SField = styled.div`
  display: flex;
  align-items: flex-end;
  label {
    width: 51px;
    line-height: 22px;
  }
  input {
    width: 152px;
    height: 29px;
    background: #fff;
    border: 1px solid #e4e4e4;
    border-bottom-color: #8a8a8a;
  }
`;

const SAreaLabel = styled.label`
  display: block;
  margin: 37px 0 7px;
  line-height: 20px;
`;

const SSelection = styled.div`
  position: relative;
  width: 253px;
  height: 160px;
  textarea {
    display: block;
    width: 100%;
    height: 100%;
    background: #fff;
    border-bottom: 1px solid #8a8a8a;
  }
`;

const SHandle = styled.span`
  position: absolute;
  left: ${(p) => p.$x}%;
  top: ${(p) => p.$y}%;
  width: 5px;
  height: 5px;
  margin: -2px 0 0 -2px;
  background: #00005c;
`;

const SDialog = styled.section`
  position: absolute;
  left: 500px;
  top: 285px;
  width: 391px;
  height: 341px;
  display: flex;
  flex-direction: column;
  border: 1px solid #b0b0b0;
  border-radius: 6px;
  background: #f0f0f0;
  box-shadow: 0 12px 24px rgba(0, 0, 0, 0.4), 0 0 6px rgba(0, 0, 0, 0.2);
`;

const SDialogTitle = styled.header`
  display: flex;
  align-items: center;
  gap: 4px;
  height: 18px;
  padding: 0 5px;
  border-radius: 6px 6px 0 0;
  background: #eff3f8;
  span {
    flex: 1;
  }
`;

const SDialogTools = styled.div`
  display: flex;
  align-items: center;
  gap: 7px;
  height: 34px;
  padding: 6px 15px 0;
`;

const SToolText = styled.button`
  display: flex;
  align-items: center;
  gap: 8px;
  font-family: "DejaVu Sans Condensed", "DejaVu Sans", sans-serif;
  font-size: 7px;
`;

const SEditor = styled.div`
  position: relative;
  flex: 1;
  margin: 0 9px;
  background: #fff;
  border-bottom: 1px solid #3c6d94;
  textarea {
    display: block;
    width: 100%;
    height: 100%;
    padding: 2px 3px;
    background: transparent;
    color: transparent;
    font-family: "DejaVu Sans Condensed", "DejaVu Sans", sans-serif;
    font-size: 7px;
    line-height: 10px;
  }
`;

const SHighlight = styled.div`
  position: absolute;
  inset: 0;
  padding: 2px 3px;
  font-family: "DejaVu Sans Condensed", "DejaVu Sans", sans-serif;
  font-size: 7px;
  line-height: 10px;
  pointer-events: none;
  b {
    font-weight: 400;
    color: #0000e0;
  }
  em {
    font-style: normal;
    color: #80106a;
  }
  i {
    display: inline-block;
    height: 8px;
    border-left: 1px solid #000;
    vertical-align: middle;
  }
`;

const SDialogFoot = styled.footer`
  display: flex;
  align-items: center;
  gap: 6px;
  height: 34px;
  padding: 0 9px 2px 8px;
`;

const SValid = styled.span`
  flex: 1;
  color: #2a9a1e;
  font-family: "DejaVu Sans Condensed", "DejaVu Sans", sans-serif;
  font-size: 7px;
`;

const SDialogBtn = styled.button`
  width: 66px;
  height: 20px;
  border: 1px solid ${(p) => (p.$primary ? "#3f6f9c" : "#d2d2d2")};
  border-radius: 3px;
  background: #fdfdfd;
  font-family: "DejaVu Sans Condensed", "DejaVu Sans", sans-serif;
  font-size: 7px;
`;

const SPointer = styled.span`
  position: absolute;
  left: 225px;
  top: 195px;
`;
